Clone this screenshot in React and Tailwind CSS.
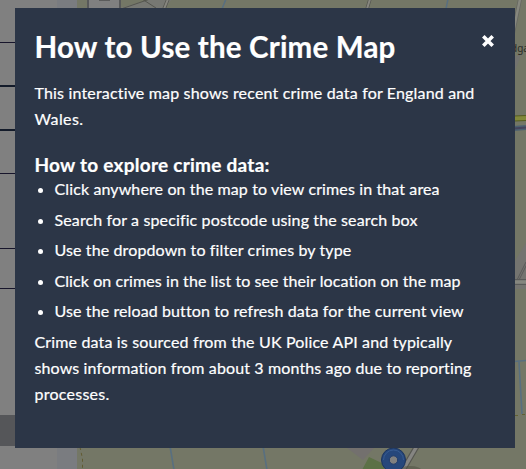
import React from "react";

const tips = [
  ["Click anywhere on the map to view crimes in that area", "tracking-[0.120px]"],
  ["Search for a specific postcode using the search box", "tracking-[0.130px]"],
  ["Use the dropdown to filter crimes by type", "tracking-[0.120px]"],
  ["Click on crimes in the list to see their location on the map", "tracking-[0.080px]"],
  ["Use the reload button to refresh data for the current view", "tracking-[0.110px]"],
];

function MapCanvas() {
  return (
    <svg className="h-full w-full" viewBox="77 0 449 469" fill="none">
      <path fill="#747766" d="M77 0h449v469H77z" />
      {/* roads and built-up areas along the top */}
      <path fill="#777873" d="M120 8 148 0h23l-6 8z" />
      <path stroke="#55564f" d="M121 9 150-1M142-1l14 9" />
      <path stroke="#555650" strokeWidth="3.4" d="m168-1-4 10M370-1l-3 10" />
      <path stroke="#87867f" strokeWidth="2" d="m168-1-4 10M370-1l-3 10" />
      <path stroke="#586f80" strokeWidth="1.5" d="m226-1-4 10M448-1l-2 10" />
      {/* zoom control */}
      <path fill="#58595a" d="M87 0h34v12H87z" />
      <path fill="#808080" d="M89 0h30v12H89z" />
      <path fill="#5b5b5b" d="M99 0h11v1H99z" />
      {/* right edge */}
      <path stroke="#666762" strokeWidth="4" d="m520-1-8 39" />
      <path stroke="#86877e" strokeWidth="2.4" d="m520-1-8 39" />
      <path fill="#73736f" d="m515 56 6-1-6 16z" />
      <path stroke="#555c20" strokeWidth="6" d="m514 118.500 12-.5" />
      <path stroke="#82883b" strokeWidth="4" d="m514 118.500 12-.5" />
      <path stroke="#4c6070" strokeWidth="5" d="m514 128.500 12-1" />
      <path stroke="#45445c" strokeWidth="2" d="m514 128.500 12-1" />
      <path fill="#747470" d="m515 261 11-18v46h-11z" />
      <path stroke="#595a59" d="m517 280 9-18M519 280l9-18M514 279.500h12M514 284.500h12" />
      <path stroke="#85867f" strokeWidth="3" d="M514 282h12" />
      <path stroke="#586f80" strokeWidth="1.600" d="m514 361.500 12-1M519 362l3 52" />
      <path stroke="#616032" strokeDasharray="3 4 9 3" d="M515 415.500h3M522 414.500h8" />
      <text x="511" y="51.500" fill="#292a25" className="font-['Noto_Sans',sans-serif] text-[10px]">dga</text>
      {/* bottom edge */}
      <path stroke="#625b32" strokeDasharray="3 3" d="m80 447 2.500 12v10" />
      <path stroke="#586f80" strokeWidth="1.600" d="m170 446 4 24M263 446l4 24" />
      <path fill="#73706e" d="m347 448h27l-11 12z" />
      <path fill="#5c7146" d="m369 457 17 8-2 5h-22z" />
      <path stroke="#555650" strokeWidth="5.500" d="m417 446-14 24" />
      <path stroke="#858582" strokeWidth="3.400" d="m417 446-14 24" />
      <ellipse cx="410" cy="471" rx="12" ry="5" fill="#4e503f" opacity=".5" />
      <circle cx="393.500" cy="460" r="12" fill="#26477b" stroke="#1c355f" />
      <path stroke="#365b91" d="M383.500 460a10 10 0 0 1 20 0" />
      <circle cx="393.500" cy="460" r="4.200" fill="#808080" stroke="#203c6b" />
    </svg>
  );
}

function Sidebar() {
  return (
    <div className="flex h-full w-[57px] shrink-0 flex-col bg-[#808080]">
      <div className="h-[43px] border-b border-[#17152b]" />
      <div className="h-[44px] border-b-2 border-[#131b2a]" />
      <div className="h-[44px] border-b-2 border-[#131b2a]" />
      <div className="h-[43px] border-b border-[#17152b]" />
      <div className="h-[75px] border-b border-[#17152b]" />
      <div className="h-[40px] border-b border-[#17152b]" />
      <div className="mt-[126px] h-[31px] bg-[#555659]" />
    </div>
  );
}

export default function App() {
  return (
    <div className="relative flex h-[469px] w-[526px] overflow-hidden bg-[#7a7c80]">
      <Sidebar />
      <div className="ml-5 min-w-0 flex-1">
        <MapCanvas />
      </div>

      <div className="absolute top-2 left-[15px] h-[440px] w-[500px] bg-[#2c3647] py-5 pr-5 pl-[19.500px] font-[Lato,sans-serif] text-base leading-[26px] whitespace-nowrap text-white [-webkit-text-stroke:0.2px_white] [font-variant-ligatures:none]">
        <div className="flex justify-between">
          <h2 className="text-[29.500px] leading-[38px] font-bold tracking-[0.180px]">How to Use the Crime Map</h2>
          <button aria-label="Close" className="mt-[7px] mr-[1.500px] h-3 w-3">
            <svg viewBox="0 0 12 12" className="h-3 w-3" stroke="currentColor" strokeWidth="3.600">
              <path d="m1.300 1.300 9.400 9.400M10.700 1.300l-9.400 9.400" />
            </svg>
          </button>
        </div>
        <p className="mt-[14px]">
          <span className="block tracking-[0.170px]">This interactive map shows recent crime data for England and</span>
          <span className="block tracking-[0.400px]">Wales.</span>
        </p>
        <h3 className="mt-[21px] text-[19px] leading-6 font-bold tracking-[0.250px]">How to explore crime data:</h3>
        <ul className="-mt-px list-disc pl-5">
          {tips.map(([text, tracking]) => (
            <li key={text} className="mb-[4.600px]">
              <span className={tracking}>{text}</span>
            </li>
          ))}
        </ul>
        <p>
          <span className="block tracking-[0.160px]">Crime data is sourced from the UK Police API and typically</span>
          <span className="block tracking-[0.130px]">shows information from about 3 months ago due to reporting</span>
          <span className="block tracking-[0.250px]">processes.</span>
        </p>
      </div>
    </div>
  );
}
